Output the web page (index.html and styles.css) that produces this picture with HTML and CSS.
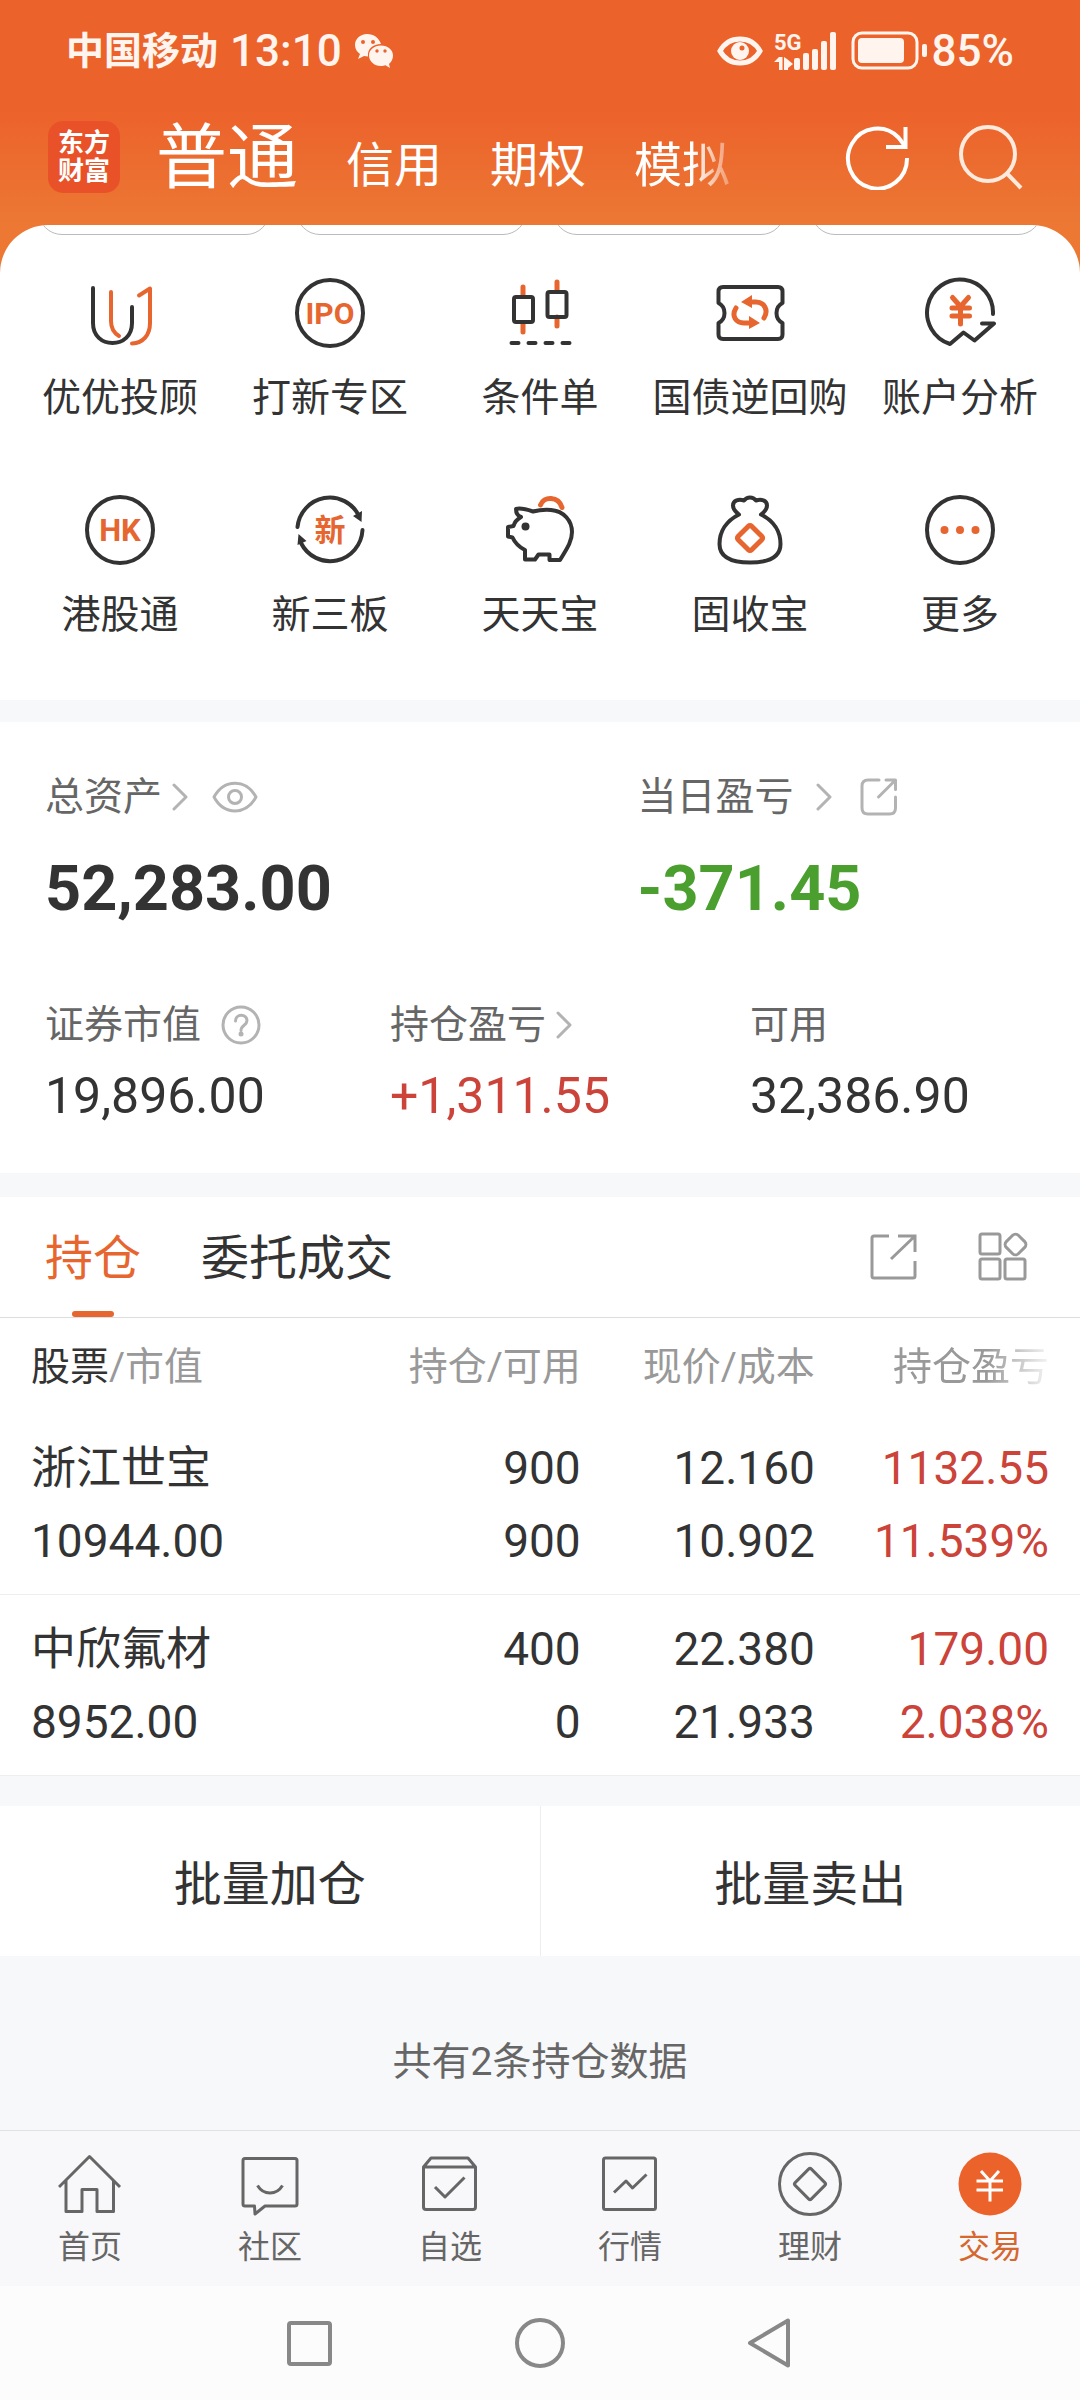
FILE: index.html
```html
<!DOCTYPE html>
<html lang="zh-CN">
<head>
<meta charset="UTF-8" />
<meta name="viewport" content="width=device-width, initial-scale=1" />
<title>东方财富 - 交易</title>
<link rel="stylesheet" href="styles.css">
</head>
<body>

<div class="top">
  <div class="status-bar">
    <div class="status-left">
      <span class="carrier">中国移动</span>
      <span class="time">13:10</span>
      <svg class="wechat" width="40" height="36" viewBox="0 0 40 36">
        <path fill="#fff5ee" d="M13 1C6 1 1 6 1 12c0 4 2 7 5 9l-2 5 6-3 4 .5C13 16 19 11 27 11 25 5 20 1 13 1z"/>
        <path fill="#fff5ee" d="M27 12.500c-7 0-12 4.500-12 10s5 10.500 12 10.500c2 0 3-.3 4.500-.7L36 35l-1-4c2.500-2 4-5 4-8.500 0-5.500-5-10-12-10z"/>
        <g fill="#ec622b"><circle cx="9" cy="9" r="2"/><circle cx="19" cy="9" r="2"/><circle cx="23" cy="18" r="1.700"/><circle cx="31" cy="18" r="1.700"/></g>
      </svg>
    </div>
    <div class="status-right">
      <svg class="status-eye" width="46" height="32" viewBox="0 0 46 32" fill="none" stroke="#fff5ee">
        <path stroke-width="5" d="M3 16C12 0 34 0 43 16 34 32 12 32 3 16z"/>
        <circle cx="23" cy="16" r="9" fill="#fff5ee" stroke="none"/>
        <circle cx="25" cy="13" r="2.500" fill="#ec622b" stroke="none"/>
      </svg>
      <svg class="signal" width="62" height="44" viewBox="0 0 62 44" fill="#fff5ee">
        <text x="0" y="21" class="signal-text">5G</text>
        <path d="M5 28h3.500v13H5v-8H0zM10 28l3 2 6 5-5 4v2h-4z"/>
        <rect x="20" y="29" width="6" height="12" rx="2"/>
        <rect x="29" y="24" width="6" height="17" rx="2"/>
        <rect x="38" y="20" width="6" height="21" rx="2"/>
        <rect x="47" y="12" width="6" height="29" rx="2"/>
        <rect x="56" y="3" width="6" height="38" rx="2"/>
      </svg>
      <svg class="battery" width="78" height="40" viewBox="0 0 78 40" fill="#fff5ee">
        <rect x="3" y="2" width="64" height="35" rx="9" fill="none" stroke="#fff5ee" stroke-width="3"/>
        <rect x="8" y="7" width="46" height="25" rx="4"/>
        <rect x="72" y="13" width="5" height="13" rx="2"/>
      </svg>
      <span class="time">85%</span>
    </div>
  </div>

  <header class="title-bar">
    <a class="logo" href="#">东方<br>财富</a>
    <nav class="accounts">
      <a class="active" href="#">普通</a>
      <a href="#">信用</a>
      <a href="#">期权</a>
      <a class="fade" href="#">模拟</a>
    </nav>
    <div class="title-tools">
      <button type="button" aria-label="刷新">
        <svg width="66" height="66" viewBox="0 0 66 66" fill="none" stroke="#fff" stroke-width="4">
          <path d="M62 34A29.500 30 0 1 1 53.500 13.500L60 22"/><path d="M60.500 3v20H41"/>
        </svg>
      </button>
      <button type="button" aria-label="搜索">
        <svg width="66" height="66" viewBox="0 0 66 66" fill="none" stroke="#ffeadd" stroke-width="4">
          <circle cx="31" cy="30" r="27"/><path d="M49.500 49L64 64"/>
        </svg>
      </button>
    </div>
  </header>

  <section class="menu-card">
    <div class="pills"><i></i><i></i><i></i><i></i></div>
    <nav class="menu">
      <a href="#">
        <svg class="ico" viewBox="0 0 72 72">
          <path d="M9 11V46C9 59 18 66 28.500 66S48 59 48 46V30"/>
          <path class="o" d="M27 15V44c0 7 3 12 8 15M55 18.500l11-7V46c0 12-7 20-18 20.500"/>
        </svg>
        <span>优优投顾</span>
      </a>
      <a href="#">
        <svg class="ico" viewBox="0 0 72 72"><circle cx="36" cy="36" r="33"/><text x="36" y="47" font-size="30">IPO</text></svg>
        <span>打新专区</span>
      </a>
      <a href="#">
        <svg class="ico" viewBox="0 0 72 72">
          <path class="o thick" d="M19 10v9M19 46v9M53 5v9M53 40v9"/>
          <rect x="10" y="20" width="19" height="25" rx="2"/><rect x="43.500" y="15" width="19" height="25" rx="2"/>
          <path d="M7.500 66h7M24.500 66h7M41.500 66h7M58.500 66h7"/>
        </svg>
        <span>条件单</span>
      </a>
      <a href="#">
        <svg class="ico" viewBox="0 0 72 72">
          <path d="M9 10H64q4.500 0 4.500 4.500V26q-6 3-6 10t6 10V57.500q0 4.500-4.500 4.500H9q-4.500 0-4.500-4.500V46q6-3 6-10t-6-10V14.500Q4.500 10 9 10z"/>
          <path class="o thick" d="M22 31c-5 8 0 15 8 15h6M50 41c5-8 0-16-8-16h-6"/>
          <path class="of" d="M27 25l11-7v13zM46 46l-11-7v13z"/>
        </svg>
        <span>国债逆回购</span>
      </a>
      <a href="#">
        <svg class="ico" viewBox="0 0 72 72">
          <path d="M69 37A33 33 0 1 0 26 67L39.500 55.500 50.500 63.500 70 46.500H58"/>
          <path class="o thick" d="M28.500 20.500l8 9 8-9M28 31h17.500M28 39h17.500M36.500 30v17"/>
        </svg>
        <span>账户分析</span>
      </a>
      <a href="#">
        <svg class="ico" viewBox="0 0 72 72"><circle cx="36" cy="36" r="33"/><text x="36" y="47" font-size="31">HK</text></svg>
        <span>港股通</span>
      </a>
      <a href="#">
        <svg class="ico" viewBox="0 0 72 72">
          <path d="M3.500 33A32.500 33 0 0 1 65 22M68.500 36A32.500 33 0 0 1 7 49"/>
          <path class="df" d="M67.500 28l.5-11-9 5zM4.500 40l-1 11 9-4z"/>
          <text x="36" y="47" font-size="31">新</text>
        </svg>
        <span>新三板</span>
      </a>
      <a href="#">
        <svg class="ico" viewBox="0 0 72 72">
          <path d="M12 15c5-1.500 11 .5 17 2.500 6-1.500 12-2 18-1.500C60 17 68 27 68 38c0 10-6 18-12 28H45.500V60.500h-11L31 65.500H21V56C15 53 11 49 8.500 43.500L4 42.500V33l5.500-1c1-4 4-7 7.500-9-3-1-5-4-5-8z"/>
          <circle class="df" cx="21.500" cy="32.500" r="4"/>
          <path class="o thick" d="M36.500 11c3-9 18-9 21.500 2.500"/>
        </svg>
        <span>天天宝</span>
      </a>
      <a href="#">
        <svg class="ico" viewBox="0 0 72 72">
          <path d="M25 20.500C12 27 5.500 38 5.500 50c0 14 13 18.500 30.500 18.500S66.500 64 66.500 50C66.500 38 60 27 47 20.500c4-3 6-6 6-9C53 6 47 5 42 6.500c-3-4-9-4-12 0C25 5 19 6 19 11.500c0 3 2 6 6 9z"/>
          <rect class="o thick" x="26.500" y="34.500" width="19" height="19" rx="2" transform="rotate(45 36 44)"/>
        </svg>
        <span>固收宝</span>
      </a>
      <a href="#">
        <svg class="ico" viewBox="0 0 72 72"><circle cx="36" cy="36" r="33"/><g class="of"><circle cx="20.500" cy="36" r="4"/><circle cx="36" cy="36" r="4"/><circle cx="51.500" cy="36" r="4"/></g></svg>
        <span>更多</span>
      </a>
    </nav>
  </section>
</div>

<section class="assets">
  <div class="assets-main">
    <div>
      <div class="label">
        <a href="#">总资产<svg class="chevron" viewBox="0 0 16 28"><path d="M2 2l12 12L2 26"/></svg></a>
        <button type="button" aria-label="隐藏金额">
          <svg class="eye" width="46" height="32" viewBox="0 0 46 32"><path d="M2 16C12-2.500 34-2.500 44 16 34 34.500 12 34.500 2 16z"/><circle cx="23" cy="16" r="6.500"/></svg>
        </button>
      </div>
      <div class="total">52,283.00</div>
    </div>
    <div>
      <div class="label wide">
        <a href="#">当日盈亏<svg class="chevron" viewBox="0 0 16 28"><path d="M2 2l12 12L2 26"/></svg></a>
        <button type="button" aria-label="分享当日盈亏">
          <svg width="38" height="38" viewBox="0 0 38 38"><path d="M19 2H8Q2 2 2 8V30q0 6 6 6H29.500q6 0 6-6V19M26 2h9.500v9.500M35 2.500L18.500 19"/></svg>
        </button>
      </div>
      <div class="total green">-371.45</div>
    </div>
  </div>
  <div class="assets-sub">
    <div>
      <div class="label">证券市值
        <svg class="help" width="40" height="40" viewBox="0 0 40 40"><circle cx="20" cy="20" r="18"/><path d="M14.500 16c0-7.500 11.500-7.500 11.500-.5 0 5-6 4.500-6 10"/><circle class="dot" cx="20" cy="29" r="2.500"/></svg>
      </div>
      <div class="value">19,896.00</div>
    </div>
    <div>
      <div class="label"><a href="#">持仓盈亏<svg class="chevron" viewBox="0 0 16 28"><path d="M2 2l12 12L2 26"/></svg></a></div>
      <div class="value red">+1,311.55</div>
    </div>
    <div>
      <div class="label">可用</div>
      <div class="value">32,386.90</div>
    </div>
  </div>
</section>

<section class="positions">
  <div class="tabs">
    <button type="button" class="tab active">持仓</button>
    <button type="button" class="tab">委托成交</button>
    <div class="tab-tools">
      <button type="button" aria-label="分享持仓">
        <svg width="48" height="48" viewBox="0 0 48 48"><path d="M19 3H4q-2 0-2 2V43q0 2 2 2H43q2 0 2-2V28M28 3H45V19M45 3L21 26"/></svg>
      </button>
      <button type="button" aria-label="更多功能">
        <svg width="50" height="50" viewBox="0 0 50 50"><rect x="2" y="2" width="20" height="20" rx="2"/><rect x="2" y="27" width="20" height="20" rx="2"/><rect x="27" y="27" width="20" height="20" rx="2"/><rect x="29" y="4" width="17" height="17" rx="4" transform="rotate(45 37.500 12.500)"/></svg>
      </button>
    </div>
  </div>
  <table>
    <thead>
      <tr>
        <th><b>股票</b>/市值</th>
        <th>持仓/可用</th>
        <th>现价/成本</th>
        <th><span class="fade-end">持仓盈亏</span></th>
      </tr>
    </thead>
    <tbody>
      <tr>
        <td><span class="name">浙江世宝</span><br>10944.00</td>
        <td>900<br>900</td>
        <td>12.160<br>10.902</td>
        <td class="red">1132.55<br>11.539%</td>
      </tr>
      <tr>
        <td><span class="name">中欣氟材</span><br>8952.00</td>
        <td>400<br>0</td>
        <td>22.380<br>21.933</td>
        <td class="red">179.00<br>2.038%</td>
      </tr>
    </tbody>
  </table>
</section>

<div class="batch">
  <button type="button">批量加仓</button>
  <button type="button">批量卖出</button>
</div>

<p class="count">共有2条持仓数据</p>

<nav class="tabbar">
  <a href="#">
    <svg viewBox="0 0 64 64"><path d="M1 35L31.500 4.500 62 35M8 28V59.500H24V37.500H39V59.500H55.500V28"/></svg>
    <span>首页</span>
  </a>
  <a href="#">
    <svg viewBox="0 0 64 64"><path d="M7 6.500H57q2 0 2 2V52q0 2-2 2H27l-10 8-.5-8H7q-2 0-2-2V8.500q0-2 2-2zM19.500 33.500c6 10 19 10 25 0"/></svg>
    <span>社区</span>
  </a>
  <a href="#">
    <svg viewBox="0 0 64 64"><path d="M5.500 15L13 6H50l7.500 9V55q0 2.500-2.500 2.500H8q-2.500 0-2.500-2.500zH57.500M17 35l10 10L46.500 25.500"/></svg>
    <span>自选</span>
  </a>
  <a href="#">
    <svg viewBox="0 0 64 64"><rect x="5.500" y="6" width="52" height="51.500" rx="2"/><path d="M16 40.500L28 29l6.500 7L48.500 22.500"/></svg>
    <span>行情</span>
  </a>
  <a href="#">
    <svg viewBox="0 0 64 64"><circle cx="32" cy="32" r="30.500"/><rect x="20.500" y="20.500" width="23" height="23" rx="2" transform="rotate(45 32 32)"/></svg>
    <span>理财</span>
  </a>
  <a class="active" href="#">
    <svg viewBox="0 0 64 64"><circle cx="32" cy="32" r="31.500" fill="#ec622b" stroke="none"/><path stroke="#fff" d="M23 19l9 10 9-10M18.500 29h26.500M18.500 38h26.500M32 29v20.500"/></svg>
    <span>交易</span>
  </a>
</nav>

<div class="system-nav">
  <button type="button" aria-label="最近任务"><svg viewBox="0 0 60 60"><rect x="9" y="10" width="41" height="41" rx="2"/></svg></button>
  <button type="button" aria-label="主屏幕"><svg viewBox="0 0 60 60"><circle cx="30" cy="30" r="23"/></svg></button>
  <button type="button" aria-label="返回"><svg viewBox="0 0 60 60"><path d="M10 30L48 7.500v45z"/></svg></button>
</div>

</body>
</html>
```
FILE: styles.css
```css
* {
  box-sizing: border-box;
}
body {
  margin: 0;
  font-family: Roboto, "Noto Sans CJK SC", sans-serif;
  font-size: 39px;
  color: #333;
  background-color: #f7f8fa;
}
a {
  color: inherit;
  text-decoration: none;
}
button {
  padding: 0;
  border: none;
  background: none;
  font: inherit;
  color: inherit;
  cursor: pointer;
}
svg {
  display: block;
  flex: none;
}
.red {
  color: #cb4339;
}
.green {
  color: #4a9f2f;
}

/* header */
.top {
  background: linear-gradient(#ec622b 110px, #ec7834 225px);
}
.status-bar {
  display: flex;
  justify-content: space-between;
  align-items: center;
  height: 102px;
  padding: 0 66px;
  color: #fff5ee;
}
.status-left, .status-right {
  display: flex;
  align-items: center;
}
.carrier {
  font-size: 38px;
  font-weight: 700;
  line-height: 44px;
}
.time {
  font-size: 44px;
  font-weight: 500;
}
.status-left {
  gap: 12px;
}
.status-eye {
  margin-right: 11px;
}
.signal {
  margin-right: 14px;
}
.battery {
  margin-right: 4px;
}
.signal-text {
  font-size: 22px;
  font-weight: 700;
}
.title-bar {
  display: flex;
  align-items: center;
  height: 123px;
  padding: 0 57px 14px 48px;
  color: #fff;
}
.logo {
  width: 72px;
  height: 72px;
  padding-top: 8px;
  border-radius: 15px;
  background-color: #e95228;
  font-size: 26px;
  font-weight: 700;
  line-height: 28px;
  text-align: center;
}
.accounts {
  flex: 1;
  display: flex;
  align-items: last baseline;
  gap: 48px;
  margin-left: 36px;
  padding-top: 10px;
  font-size: 48px;
  line-height: 90px;
}
.accounts .active {
  font-size: 71px;
}
.fade {
  mask-image: linear-gradient(to right, #000 60%, rgba(0, 0, 0, 0.3));
}
.title-tools {
  display: flex;
  gap: 46px;
}

/* shortcuts */
.menu-card {
  overflow: hidden;
  padding-bottom: 57px;
  border-radius: 48px 48px 0 0;
  background-color: #fff;
}
.pills {
  display: flex;
  gap: 26px;
  height: 10px;
  padding: 0 38px;
  align-items: flex-end;
}
.pills i {
  flex: 1;
  height: 60px;
  border: 1px solid #bbb;
  border-radius: 24px;
}
.menu {
  display: grid;
  grid-template-columns: repeat(5, 1fr);
  row-gap: 68px;
  padding: 42px 15px 0;
}
.menu a {
  display: flex;
  flex-direction: column;
  align-items: center;
  gap: 21px;
  line-height: 56px;
  white-space: nowrap;
}
.ico {
  width: 72px;
  height: 72px;
  fill: none;
  stroke: #333;
  stroke-width: 4;
  stroke-linecap: round;
  stroke-linejoin: round;
}
.ico .o {
  stroke: #e7652f;
}
.ico .thick {
  stroke-width: 5;
}
.ico .of {
  fill: #e7652f;
  stroke: none;
}
.ico .df {
  fill: #333;
  stroke: none;
}
.ico text {
  fill: #e7652f;
  stroke: none;
  font-weight: 700;
  text-anchor: middle;
}

/* assets */
.assets {
  margin-top: 22px;
  padding: 45px 46px 47px 45px;
  background-color: #fff;
}
.assets-main {
  display: grid;
  grid-template-columns: 592fr 396fr;
  margin-bottom: 70px;
}
.assets-sub {
  display: grid;
  grid-template-columns: 345fr 360fr 284fr;
}
.label {
  display: flex;
  align-items: center;
  gap: 20px;
  line-height: 60px;
  color: #666;
}
.label a {
  display: flex;
  align-items: center;
  gap: 10px;
}
.label button {
  margin-left: 4px;
}
.wide, .wide a {
  gap: 22px;
}
.wide button {
  margin-left: 6px;
}
.label svg {
  fill: none;
  stroke: #b3b3b3;
  stroke-width: 3;
  stroke-linecap: round;
  stroke-linejoin: round;
}
.chevron {
  width: 16px;
  height: 28px;
}
.label .dot {
  fill: #b3b3b3;
  stroke: none;
}
.total {
  margin-top: 26px;
  font-size: 63px;
  font-weight: 700;
  line-height: 72px;
}
.value {
  margin-top: 11px;
  font-size: 50px;
  line-height: 60px;
}

/* positions */
.positions {
  margin-top: 24px;
  background-color: #fff;
}
.tabs {
  display: flex;
  height: 121px;
  gap: 60px;
  padding: 0 52px 0 45px;
  border-bottom: 1px solid #ddd;
}
.tab {
  position: relative;
  padding-bottom: 6px;
  font-size: 48px;
}
.tab.active {
  color: #e7652f;
}
.tab.active::after {
  content: "";
  position: absolute;
  left: 50%;
  bottom: 0;
  width: 42px;
  height: 6px;
  margin-left: -21px;
  border-radius: 3px;
  background-color: #e7652f;
}
.tab-tools {
  display: flex;
  align-items: center;
  gap: 60px;
  margin-left: auto;
}
.tab-tools svg {
  fill: none;
  stroke: #999;
  stroke-width: 3;
}
table, thead, tbody {
  display: block;
}
tr {
  display: grid;
  grid-template-columns: 31fr 23fr 23fr 23fr;
  padding: 18px 31px 16px;
  border-bottom: 1px solid #eee;
  font-size: 46px;
  line-height: 73px;
}
thead tr {
  padding: 19px 31px 17px;
  border: none;
  font-size: 39px;
  line-height: 60px;
  color: #999;
}
th, td {
  padding: 0;
  font-weight: 400;
  text-align: right;
  white-space: nowrap;
}
th:first-child, td:first-child {
  text-align: left;
}
th b {
  font-weight: 400;
  color: #333;
}
.name {
  font-size: 45px;
}
.fade-end {
  mask-image: linear-gradient(to right, #000 60%, rgba(0, 0, 0, 0.1));
}

.batch {
  display: flex;
  margin-top: 30px;
  background-color: #fff;
}
.batch button {
  flex: 1;
  height: 150px;
  padding-bottom: 3px;
  font-size: 48px;
}
.batch button + button {
  border-left: 1px solid #eee;
}
.count {
  margin: 0;
  padding: 76px 0 38px;
  line-height: 60px;
  text-align: center;
  color: #666;
}

/* bottom bars */
.tabbar {
  display: flex;
  padding: 21px 0 19px;
  border-top: 1px solid #e0e2e5;
  background-color: #f8f8fa;
}
.tabbar a {
  flex: 1;
  display: flex;
  flex-direction: column;
  align-items: center;
  gap: 11px;
  font-size: 32px;
  line-height: 40px;
  color: #666;
}
.tabbar svg {
  width: 64px;
  height: 64px;
  fill: none;
  stroke: #666;
  stroke-width: 3;
  stroke-linejoin: round;
}
.tabbar .active {
  color: #d5672f;
}
.system-nav {
  display: flex;
  justify-content: center;
  gap: 170px;
  padding: 27px 0;
  background-color: #fcfcfc;
}
.system-nav svg {
  width: 60px;
  height: 60px;
  fill: none;
  stroke: #888;
  stroke-width: 4;
  stroke-linejoin: round;
}
```
